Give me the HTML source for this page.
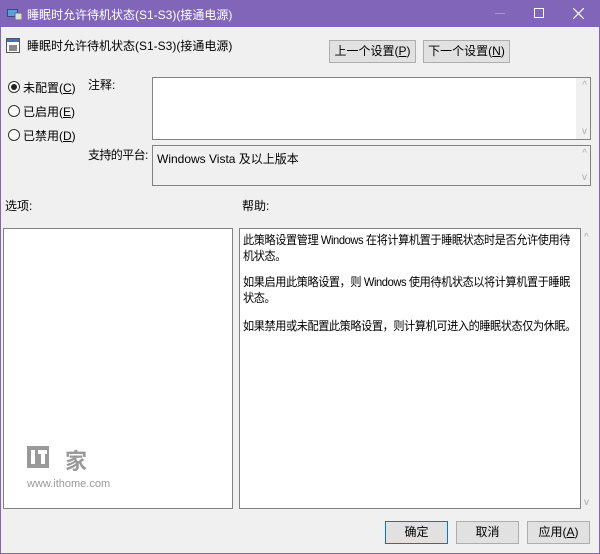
<!DOCTYPE html>
<html><head><meta charset="utf-8"><style>
*{margin:0;padding:0;box-sizing:border-box}
body{width:600px;height:554px;background:#f0f0f0;font-family:"Liberation Sans","Microsoft YaHei","Noto Sans CJK SC",sans-serif;font-size:12px;color:#000;position:relative;overflow:hidden}
.a{position:absolute;white-space:nowrap}
.win{position:absolute;left:0;top:0;width:600px;height:554px;border:1px solid #8165b9;border-top:none}
.title{position:absolute;left:0;top:0;width:600px;height:27px;background:#8165b9;color:#fff}
.btn{position:absolute;height:23px;background:#e1e1e1;border:1px solid #adadad;text-align:center;line-height:21px;font-size:12px}
.box{position:absolute;background:#fff;border:1px solid #828282}
.rad{position:absolute;width:12px;height:12px;border:1px solid #333;border-radius:50%;background:#fff}
.sb{position:absolute;color:#aaa;font-size:10px}
u{text-decoration:underline}
</style></head><body>
<div class="win"></div>
<div class="title">
 <svg class="a" style="left:7px;top:7px" width="15" height="13"><rect x="0" y="2" width="11" height="8" fill="#2c4a8a"/><rect x="1" y="3" width="9" height="6" fill="#5aa0e0"/><rect x="8" y="6" width="7" height="7" fill="#ddd" stroke="#666" stroke-width="1"/></svg>
 <div class="a" style="left:27px;top:6px;font-size:12px">睡眠时允许待机状态(S1-S3)(接通电源)</div>
 <div class="a" style="left:495px;top:13px;width:10px;height:1px;background:#a898d0"></div>
 <div class="a" style="left:534px;top:8px;width:10px;height:10px;border:1px solid #fff"></div>
 <svg class="a" style="left:573px;top:8px" width="11" height="11"><path d="M0 0L11 11M11 0L0 11" stroke="#fff" stroke-width="1.2"/></svg>
</div>
<svg class="a" style="left:6px;top:38px" width="14" height="15"><rect x="0.5" y="0.5" width="13" height="14" fill="#fff" stroke="#555"/><rect x="1" y="1" width="12" height="3" fill="#4a6fa8"/><rect x="3" y="7" width="8" height="6" fill="#888"/></svg>
<div class="a" style="left:27px;top:37px">睡眠时允许待机状态(S1-S3)(接通电源)</div>
<div class="btn" style="left:329px;top:40px;width:87px">上一个设置(<u>P</u>)</div>
<div class="btn" style="left:423px;top:40px;width:87px">下一个设置(<u>N</u>)</div>
<div class="rad" style="left:8px;top:81px"><div style="position:absolute;left:2px;top:2px;width:6px;height:6px;border-radius:50%;background:#222"></div></div>
<div class="a" style="left:23px;top:79px">未配置(<u>C</u>)</div>
<div class="rad" style="left:8px;top:105px"></div>
<div class="a" style="left:23px;top:103px">已启用(<u>E</u>)</div>
<div class="rad" style="left:8px;top:129px"></div>
<div class="a" style="left:23px;top:127px">已禁用(<u>D</u>)</div>
<div class="a" style="left:88px;top:76px">注释:</div>
<div class="box" style="left:152px;top:77px;width:439px;height:63px"><div style="position:absolute;right:0;top:0;width:14px;height:61px;background:#f0f0f0"></div><div class="sb" style="right:3px;top:2px">^</div><div class="sb" style="right:3px;bottom:2px">v</div></div>
<div class="a" style="left:88px;top:146px;letter-spacing:-0.6px">支持的平台:</div>
<div class="box" style="left:152px;top:145px;width:439px;height:41px;background:#f0f0f0"><div class="sb" style="right:3px;top:2px">^</div><div class="sb" style="right:3px;bottom:2px">v</div></div>
<div class="a" style="left:157px;top:150px">Windows Vista 及以上版本</div>
<div class="a" style="left:5px;top:197px">选项:</div>
<div class="a" style="left:242px;top:197px">帮助:</div>
<div class="box" style="left:3px;top:228px;width:230px;height:281px"></div>
<div class="a" style="left:27px;top:446px;width:22px;height:22px;background:#999"></div>
<div class="a" style="left:31px;top:450px;width:4px;height:14px;background:#fff"></div>
<div class="a" style="left:38px;top:450px;width:9px;height:4px;background:#fff"></div>
<div class="a" style="left:41px;top:450px;width:4px;height:14px;background:#fff"></div>
<div class="a" style="left:65px;top:444px;font-size:22px;color:#999;font-weight:bold">家</div>
<div class="a" style="left:27px;top:478px;color:#999;font-size:11px">www.ithome.com</div>
<div class="box" style="left:239px;top:228px;width:342px;height:281px"></div>
<div class="sb" style="left:584px;top:232px">^</div>
<div class="sb" style="left:584px;top:497px">v</div>
<div class="a" style="left:243px;top:232px;line-height:16px;letter-spacing:-0.45px;transform:scaleX(0.93);transform-origin:0 0">此策略设置管理 Windows 在将计算机置于睡眠状态时是否允许使用待<br>机状态。<div style="height:10px"></div>如果启用此策略设置，则 Windows 使用待机状态以将计算机置于睡眠<br>状态。<div style="height:12px"></div>如果禁用或未配置此策略设置，则计算机可进入的睡眠状态仅为休眠。</div>
<div class="btn" style="left:385px;top:521px;width:63px;border:1px solid #0078d7">确定</div>
<div class="btn" style="left:456px;top:521px;width:63px">取消</div>
<div class="btn" style="left:527px;top:521px;width:63px">应用(<u>A</u>)</div>
</body></html>
